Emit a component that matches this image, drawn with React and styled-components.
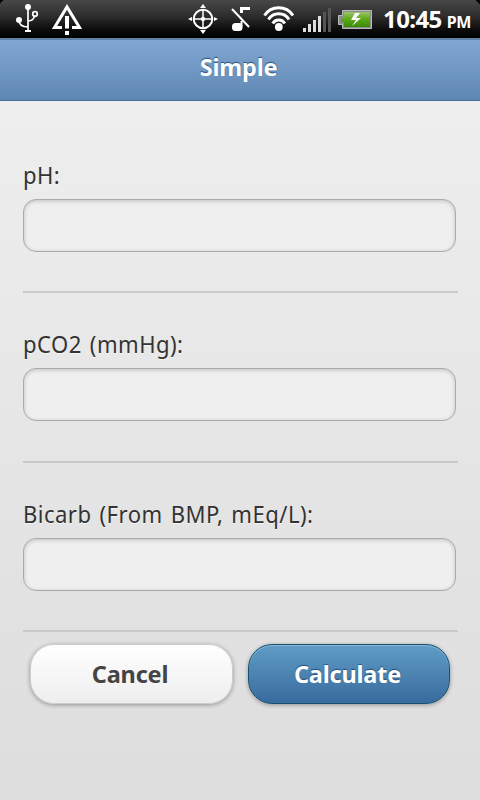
import React from "react";
import styled, { createGlobalStyle } from "styled-components";

const GlobalStyle = createGlobalStyle`
  * {
    box-sizing: border-box;
  }
  body {
    margin: 0;
    background: #dddddd;
    font-family: "Noto Sans", "Open Sans", sans-serif;
  }
`;

const Screen = styled.div`
  width: 480px;
  height: 800px;
  overflow: hidden;
  display: flex;
  flex-direction: column;
`;

const StatusBar = styled.div`
  height: 38px;
  flex: none;
  display: flex;
  justify-content: space-between;
  background: linear-gradient(#484848 0%, #2b2b2b 45%, #0c0c0c 78%, #000 100%);
`;

const StatusGroup = styled.div`
  display: flex;
`;

const Clock = styled.div`
  width: 99px;
  padding-left: 2px;
  background: linear-gradient(225deg, #000 3px, transparent 3.5px);
  color: #fff;
  font-weight: 700;
  font-size: 24px;
  line-height: 38px;
  letter-spacing: -0.6px;
  white-space: nowrap;
`;

const Meridiem = styled.span`
  margin-left: 5px;
  font-size: 16px;
  letter-spacing: -0.4px;
`;

const Header = styled.header`
  height: 63px;
  flex: none;
  border-top: 2px solid #5f82a8;
  border-bottom: 1px solid #456f9d;
  background: linear-gradient(#81a8d2, #5e87b2);
  text-align: center;
`;

const Title = styled.h1`
  margin: 0;
  padding-right: 3px;
  color: #fff;
  font-size: 23.5px;
  font-weight: 700;
  line-height: 54px;
  letter-spacing: -0.2px;
  text-shadow: 0 -1px 1px #254f7a;
`;

const Content = styled.main`
  flex: 1;
  padding: 52px 22px 0 23px;
  background: linear-gradient(#eeeeee, #dddddd);
`;

const Field = styled.div`
  height: ${(p) => p.$height}px;
  border-bottom: 2px solid #c9c9c9;
`;

const Label = styled.label`
  display: block;
  height: ${(p) => p.$height}px;
  padding-top: ${(p) => p.$height - 46}px;
  color: #333;
  font-size: 23.5px;
  line-height: 44px;
  letter-spacing: 0.48px;
  word-spacing: 2px;
  white-space: nowrap;
  transform: scaleX(0.94);
  transform-origin: left;
  text-shadow: 0 1px 0 #f6f6f6;
`;

const Input = styled.input`
  display: block;
  width: 433px;
  height: 53px;
  padding: 0 12px;
  border: 1px solid #aaa;
  border-radius: 13px;
  outline: none;
  background: #efefef;
  box-shadow: inset 0 1px 4px rgba(0, 0, 0, 0.2);
  font: inherit;
`;

const Actions = styled.div`
  display: flex;
  gap: 15px;
  padding: 12px 0 0 7px;
`;

const Button = styled.button`
  width: ${(p) => (p.$primary ? 202 : 203)}px;
  height: 60px;
  padding: 0 3px 0 0;
  border: 1px solid ${(p) => (p.$primary ? "#145072" : "#cccccc")};
  border-radius: 24px;
  background: ${(p) =>
    p.$primary ? "linear-gradient(#5f9cc5, #396b9e)" : "linear-gradient(#ffffff, #eeeeee)"};
  box-shadow: 0 1px 4px rgba(0, 0, 0, 0.35)
    ${(p) => p.$primary && ", inset 0 1px 1px rgba(255, 255, 255, 0.3)"};
  color: ${(p) => (p.$primary ? "#fff" : "#444")};
  font-family: inherit;
  font-size: 23.5px;
  font-weight: 700;
  letter-spacing: -0.2px;
  text-shadow: ${(p) => (p.$primary ? "0 -1px 1px #254f7a" : "0 1px 1px #f6f6f6")};
`;

const fields = [
  { id: "ph", label: "pH:", height: 140, labelHeight: 46 },
  { id: "pco2", label: "pCO2 (mmHg):", height: 170, labelHeight: 75 },
  { id: "bicarb", label: "Bicarb (From BMP, mEq/L):", height: 169, labelHeight: 75 },
];

function NotificationIcons() {
  return (
    <svg width="120" height="38" fill="none" stroke="#fff">
      <path d="M0 0H4Q1 1 0 4Z" fill="#000" stroke="none" />
      <g strokeWidth="1.7">
        <path d="M28 7V31M19 20C19 25 22 27 28 27M34.5 15.5C34 19 32 21 28 21" />
        <circle cx="35" cy="14" r="2.3" />
      </g>
      <g fill="#fff" stroke="none">
        <circle cx="28" cy="7" r="3" />
        <circle cx="19" cy="20" r="3" />
        <rect x="25" y="30" width="6" height="2" />
      </g>
      <path d="M62 27.500H54.5L67 7L79.500 27.500H72" strokeWidth="3" />
      <path d="M67 16V28.500M67 31V35" strokeWidth="4" />
    </svg>
  );
}

function SystemIcons() {
  return (
    <svg width="201" height="38" viewBox="180 0 201 38" fill="none" stroke="#fff">
      <circle cx="203" cy="19" r="9.3" strokeWidth="2" />
      <path d="M193 19H213M203 9V29" strokeWidth="1.5" />
      <circle cx="203" cy="19" r="2.2" fill="#fff" stroke="none" />
      <path
        d="M203 4L206 8H200ZM203 34L200 30H206ZM188 19L192 17V21ZM218 19L214 17V21Z"
        fill="#fff"
        stroke="none"
      />

      <path d="M232 9L249 27" strokeWidth="2" />
      <path d="M241.500 13V8.500H250" strokeWidth="3" />
      <path d="M241.500 21V26" strokeWidth="2" />
      <rect x="232" y="23" width="10.500" height="8" rx="3.500" fill="#fff" stroke="none" />

      <path
        d="M264.500 15.500A17 17 0 0 1 293 15.500M268.500 19.500A12 12 0 0 1 289 19.500M272.700 23.500A7 7 0 0 1 284.800 23.500"
        strokeWidth="3"
      />
      <circle cx="278.800" cy="27" r="3.900" fill="#fff" stroke="none" />

      <g stroke="none">
        <path d="M303 28H306V32H303ZM308 24H311V32H308ZM313 20H316V32H313ZM318 16H321V32H318Z" fill="#dedede" />
        <path d="M323 12H326V32H323ZM328 8H331V32H328Z" fill="#555" />
      </g>

      <path d="M342.500 10.500H371.500V28.500H342.500V24.500H338.500V15.500H342.500Z" fill="#8d8d8d" stroke="#bababa" />
      <path d="M344 12H370V27H344V22H341V18H344Z" fill="url(#charge)" stroke="none" />
      <path d="M355 13L351 20H356L352 26L361 18H356L360 13Z" fill="#fff" stroke="none" />
      <defs>
        <linearGradient id="charge" x1="0" y1="0" x2="0" y2="1">
          <stop offset="0" stopColor="#9bc56a" />
          <stop offset="0.45" stopColor="#5fa91c" />
          <stop offset="1" stopColor="#388b06" />
        </linearGradient>
      </defs>
    </svg>
  );
}

function App() {
  return (
    <>
      <GlobalStyle />
      <Screen>
        <StatusBar>
          <NotificationIcons />
          <StatusGroup>
            <SystemIcons />
            <Clock>
              10:45<Meridiem>PM</Meridiem>
            </Clock>
          </StatusGroup>
        </StatusBar>
        <Header>
          <Title>Simple</Title>
        </Header>
        <Content>
          {fields.map((f) => (
            <Field key={f.id} $height={f.height}>
              <Label htmlFor={f.id} $height={f.labelHeight}>
                {f.label}
              </Label>
              <Input id={f.id} type="text" />
            </Field>
          ))}
          <Actions>
            <Button type="button">Cancel</Button>
            <Button type="button" $primary>
              Calculate
            </Button>
          </Actions>
        </Content>
      </Screen>
    </>
  );
}

export default App;
